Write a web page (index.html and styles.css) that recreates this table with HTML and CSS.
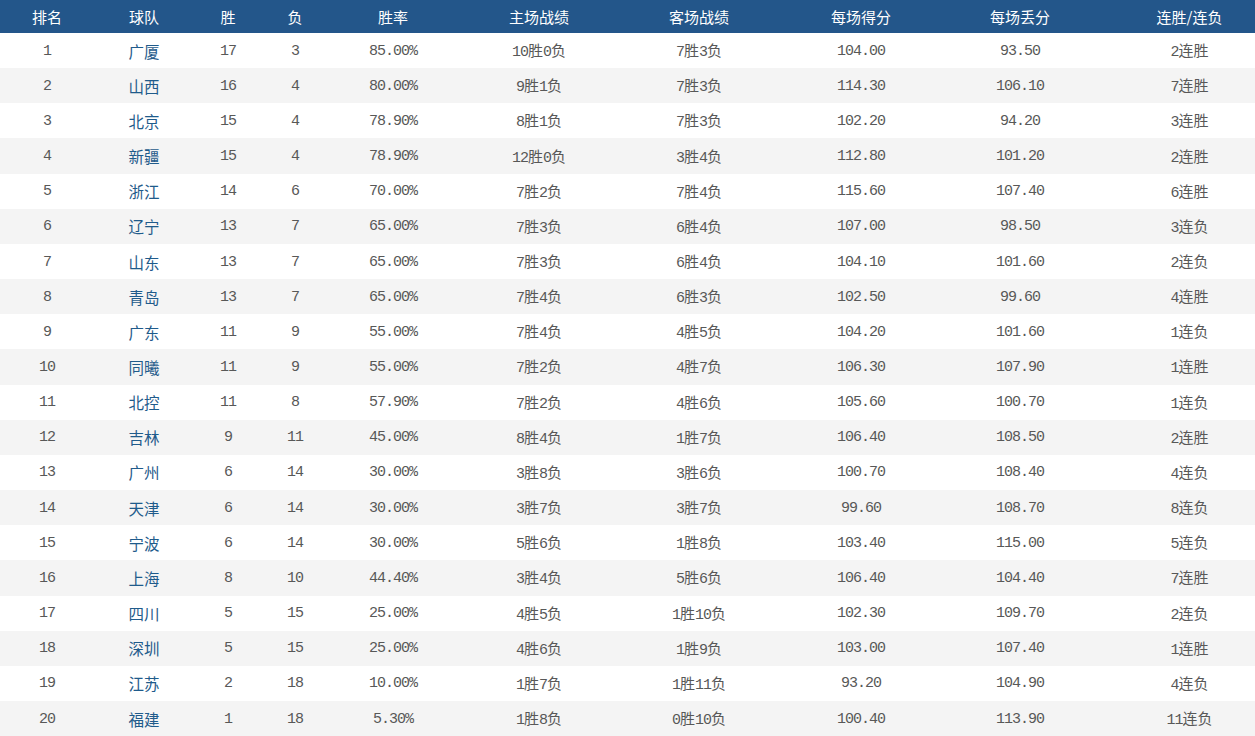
FILE: index.html
```html
<!DOCTYPE html>
<html lang="zh">
<head>
<meta charset="utf-8">
<title>积分榜</title>
<link rel="stylesheet" href="styles.css">
</head>
<body>
<div class="table">
  <div class="row head">
    <div class="c">排名</div><div class="c">球队</div><div class="c">胜</div><div class="c">负</div><div class="c">胜率</div><div class="c">主场战绩</div><div class="c">客场战绩</div><div class="c">每场得分</div><div class="c">每场丢分</div><div class="c last">连胜/连负</div>
  </div>
  <div class="row"><div class="c">1</div><div class="c team">广厦</div><div class="c">17</div><div class="c">3</div><div class="c">85.00%</div><div class="c">10<span class="z">胜</span>0<span class="z">负</span></div><div class="c">7<span class="z">胜</span>3<span class="z">负</span></div><div class="c">104.00</div><div class="c">93.50</div><div class="c last">2<span class="z">连胜</span></div></div>
  <div class="row"><div class="c">2</div><div class="c team">山西</div><div class="c">16</div><div class="c">4</div><div class="c">80.00%</div><div class="c">9<span class="z">胜</span>1<span class="z">负</span></div><div class="c">7<span class="z">胜</span>3<span class="z">负</span></div><div class="c">114.30</div><div class="c">106.10</div><div class="c last">7<span class="z">连胜</span></div></div>
  <div class="row"><div class="c">3</div><div class="c team">北京</div><div class="c">15</div><div class="c">4</div><div class="c">78.90%</div><div class="c">8<span class="z">胜</span>1<span class="z">负</span></div><div class="c">7<span class="z">胜</span>3<span class="z">负</span></div><div class="c">102.20</div><div class="c">94.20</div><div class="c last">3<span class="z">连胜</span></div></div>
  <div class="row"><div class="c">4</div><div class="c team">新疆</div><div class="c">15</div><div class="c">4</div><div class="c">78.90%</div><div class="c">12<span class="z">胜</span>0<span class="z">负</span></div><div class="c">3<span class="z">胜</span>4<span class="z">负</span></div><div class="c">112.80</div><div class="c">101.20</div><div class="c last">2<span class="z">连胜</span></div></div>
  <div class="row"><div class="c">5</div><div class="c team">浙江</div><div class="c">14</div><div class="c">6</div><div class="c">70.00%</div><div class="c">7<span class="z">胜</span>2<span class="z">负</span></div><div class="c">7<span class="z">胜</span>4<span class="z">负</span></div><div class="c">115.60</div><div class="c">107.40</div><div class="c last">6<span class="z">连胜</span></div></div>
  <div class="row"><div class="c">6</div><div class="c team">辽宁</div><div class="c">13</div><div class="c">7</div><div class="c">65.00%</div><div class="c">7<span class="z">胜</span>3<span class="z">负</span></div><div class="c">6<span class="z">胜</span>4<span class="z">负</span></div><div class="c">107.00</div><div class="c">98.50</div><div class="c last">3<span class="z">连负</span></div></div>
  <div class="row"><div class="c">7</div><div class="c team">山东</div><div class="c">13</div><div class="c">7</div><div class="c">65.00%</div><div class="c">7<span class="z">胜</span>3<span class="z">负</span></div><div class="c">6<span class="z">胜</span>4<span class="z">负</span></div><div class="c">104.10</div><div class="c">101.60</div><div class="c last">2<span class="z">连负</span></div></div>
  <div class="row"><div class="c">8</div><div class="c team">青岛</div><div class="c">13</div><div class="c">7</div><div class="c">65.00%</div><div class="c">7<span class="z">胜</span>4<span class="z">负</span></div><div class="c">6<span class="z">胜</span>3<span class="z">负</span></div><div class="c">102.50</div><div class="c">99.60</div><div class="c last">4<span class="z">连胜</span></div></div>
  <div class="row"><div class="c">9</div><div class="c team">广东</div><div class="c">11</div><div class="c">9</div><div class="c">55.00%</div><div class="c">7<span class="z">胜</span>4<span class="z">负</span></div><div class="c">4<span class="z">胜</span>5<span class="z">负</span></div><div class="c">104.20</div><div class="c">101.60</div><div class="c last">1<span class="z">连负</span></div></div>
  <div class="row"><div class="c">10</div><div class="c team">同曦</div><div class="c">11</div><div class="c">9</div><div class="c">55.00%</div><div class="c">7<span class="z">胜</span>2<span class="z">负</span></div><div class="c">4<span class="z">胜</span>7<span class="z">负</span></div><div class="c">106.30</div><div class="c">107.90</div><div class="c last">1<span class="z">连胜</span></div></div>
  <div class="row"><div class="c">11</div><div class="c team">北控</div><div class="c">11</div><div class="c">8</div><div class="c">57.90%</div><div class="c">7<span class="z">胜</span>2<span class="z">负</span></div><div class="c">4<span class="z">胜</span>6<span class="z">负</span></div><div class="c">105.60</div><div class="c">100.70</div><div class="c last">1<span class="z">连负</span></div></div>
  <div class="row"><div class="c">12</div><div class="c team">吉林</div><div class="c">9</div><div class="c">11</div><div class="c">45.00%</div><div class="c">8<span class="z">胜</span>4<span class="z">负</span></div><div class="c">1<span class="z">胜</span>7<span class="z">负</span></div><div class="c">106.40</div><div class="c">108.50</div><div class="c last">2<span class="z">连胜</span></div></div>
  <div class="row"><div class="c">13</div><div class="c team">广州</div><div class="c">6</div><div class="c">14</div><div class="c">30.00%</div><div class="c">3<span class="z">胜</span>8<span class="z">负</span></div><div class="c">3<span class="z">胜</span>6<span class="z">负</span></div><div class="c">100.70</div><div class="c">108.40</div><div class="c last">4<span class="z">连负</span></div></div>
  <div class="row"><div class="c">14</div><div class="c team">天津</div><div class="c">6</div><div class="c">14</div><div class="c">30.00%</div><div class="c">3<span class="z">胜</span>7<span class="z">负</span></div><div class="c">3<span class="z">胜</span>7<span class="z">负</span></div><div class="c">99.60</div><div class="c">108.70</div><div class="c last">8<span class="z">连负</span></div></div>
  <div class="row"><div class="c">15</div><div class="c team">宁波</div><div class="c">6</div><div class="c">14</div><div class="c">30.00%</div><div class="c">5<span class="z">胜</span>6<span class="z">负</span></div><div class="c">1<span class="z">胜</span>8<span class="z">负</span></div><div class="c">103.40</div><div class="c">115.00</div><div class="c last">5<span class="z">连负</span></div></div>
  <div class="row"><div class="c">16</div><div class="c team">上海</div><div class="c">8</div><div class="c">10</div><div class="c">44.40%</div><div class="c">3<span class="z">胜</span>4<span class="z">负</span></div><div class="c">5<span class="z">胜</span>6<span class="z">负</span></div><div class="c">106.40</div><div class="c">104.40</div><div class="c last">7<span class="z">连胜</span></div></div>
  <div class="row"><div class="c">17</div><div class="c team">四川</div><div class="c">5</div><div class="c">15</div><div class="c">25.00%</div><div class="c">4<span class="z">胜</span>5<span class="z">负</span></div><div class="c">1<span class="z">胜</span>10<span class="z">负</span></div><div class="c">102.30</div><div class="c">109.70</div><div class="c last">2<span class="z">连负</span></div></div>
  <div class="row"><div class="c">18</div><div class="c team">深圳</div><div class="c">5</div><div class="c">15</div><div class="c">25.00%</div><div class="c">4<span class="z">胜</span>6<span class="z">负</span></div><div class="c">1<span class="z">胜</span>9<span class="z">负</span></div><div class="c">103.00</div><div class="c">107.40</div><div class="c last">1<span class="z">连胜</span></div></div>
  <div class="row"><div class="c">19</div><div class="c team">江苏</div><div class="c">2</div><div class="c">18</div><div class="c">10.00%</div><div class="c">1<span class="z">胜</span>7<span class="z">负</span></div><div class="c">1<span class="z">胜</span>11<span class="z">负</span></div><div class="c">93.20</div><div class="c">104.90</div><div class="c last">4<span class="z">连负</span></div></div>
  <div class="row"><div class="c">20</div><div class="c team">福建</div><div class="c">1</div><div class="c">18</div><div class="c">5.30%</div><div class="c">1<span class="z">胜</span>8<span class="z">负</span></div><div class="c">0<span class="z">胜</span>10<span class="z">负</span></div><div class="c">100.40</div><div class="c">113.90</div><div class="c last">11<span class="z">连负</span></div></div>
</div>
</body>
</html>
```
FILE: styles.css
```css
html, body {
  margin: 0;
  padding: 0;
  background: #ffffff;
}
body {
  height: 736px;
  overflow: hidden;
}
.table {
  display: flex;
  flex-direction: column;
  height: 736px;
  font-family: "Liberation Mono", "Noto Sans CJK SC", monospace;
  font-size: 15px;
  letter-spacing: -1px;
  color: #585858;
}
.row {
  display: grid;
  grid-template-columns: 94px 100px 68px 66px 130px 162px 158px 166px 152px 1fr;
  flex: 1 1 0;
  align-items: center;
}
.row:nth-child(odd) {
  background: #f4f4f4;
}
.row.head {
  flex: 0 0 33px;
  background: #23568a;
  color: #ffffff;
  font-family: "Noto Sans CJK SC", sans-serif;
  font-size: 15px;
  letter-spacing: 0;
}
.c {
  text-align: center;
  white-space: nowrap;
  line-height: 20px;
  padding-top: 2px;
}
.head .c {
  padding-top: 0;
}
.last {
  padding-left: 28px;
}
.z {
  font-family: "Noto Sans CJK SC", sans-serif;
  font-size: 15px;
  letter-spacing: 0;
}
.team {
  font-family: "Noto Sans CJK SC", sans-serif;
  font-size: 15.5px;
  letter-spacing: 0;
  color: #1f5b8b;
  padding-top: 0;
}
```
